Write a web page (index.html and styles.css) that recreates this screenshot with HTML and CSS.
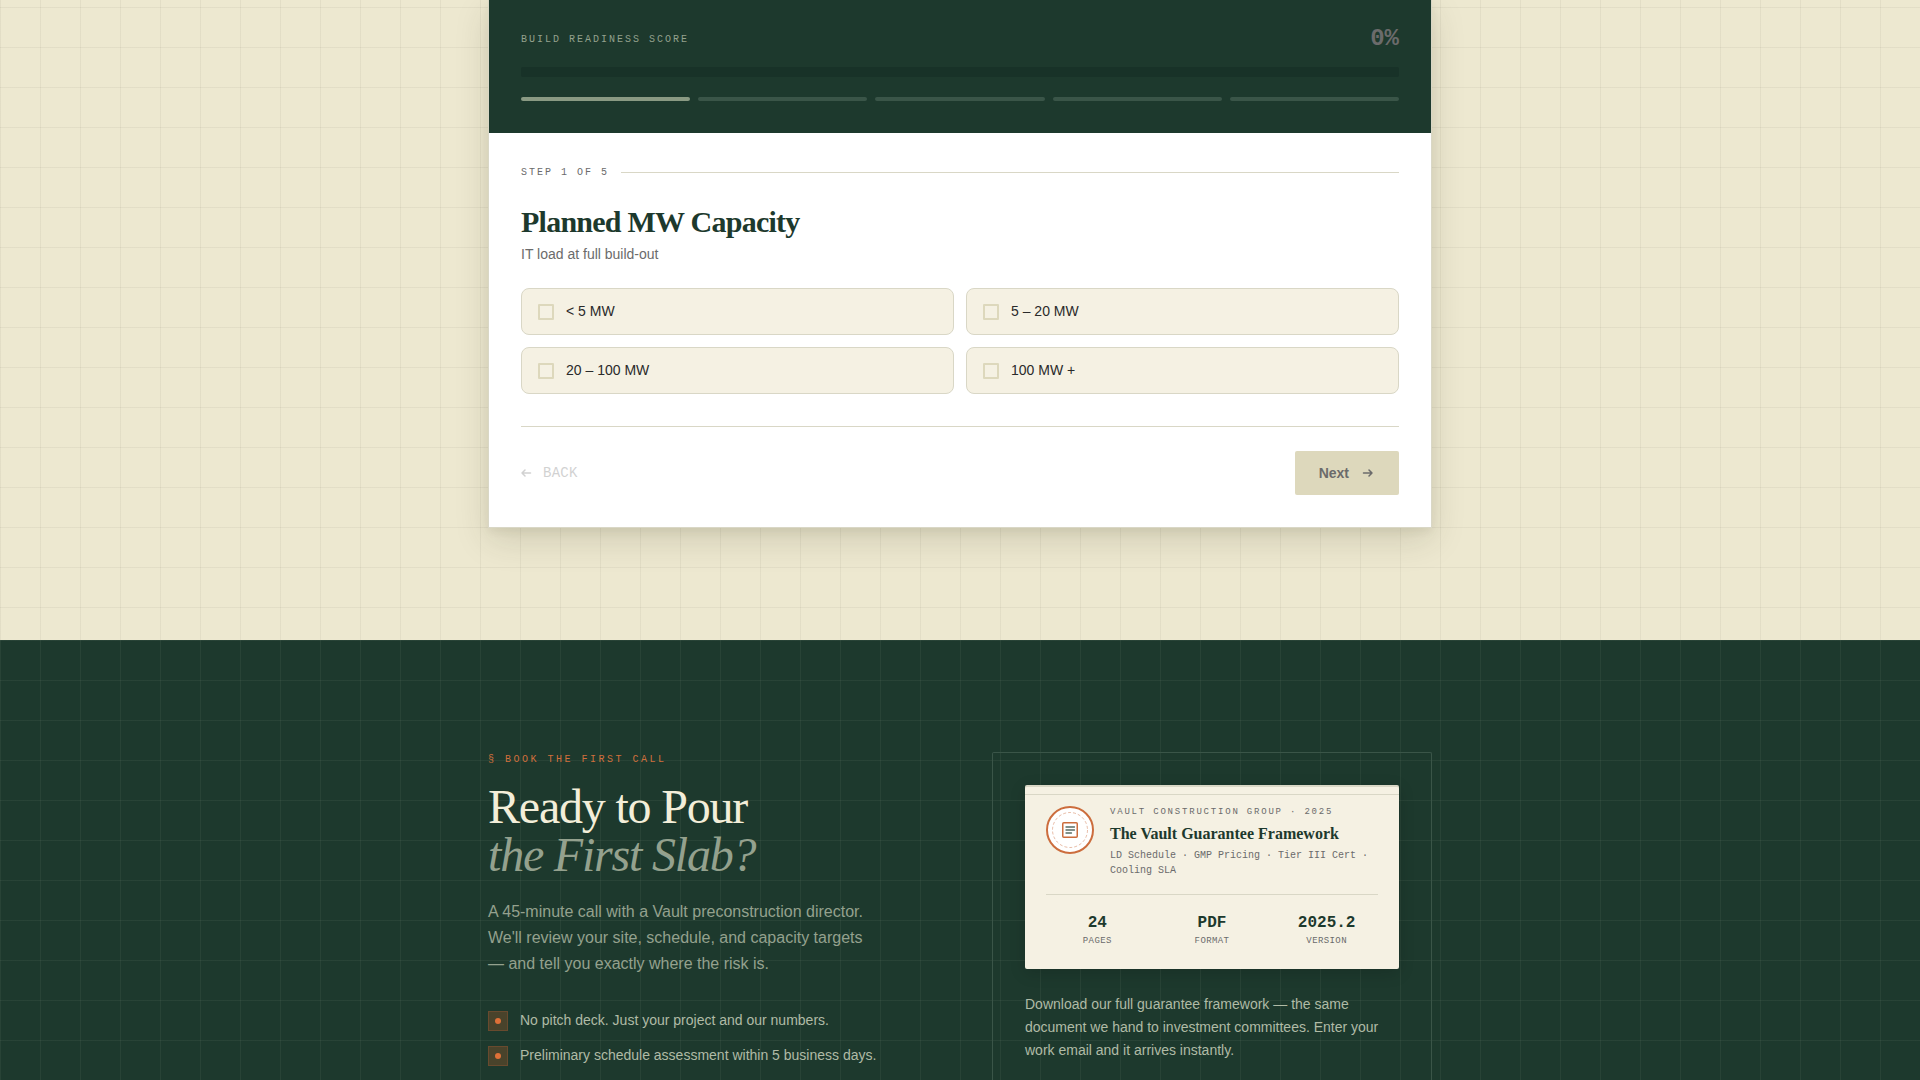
FILE: index.html
```html
<!DOCTYPE html>
<html lang="en">
<head>
<meta charset="utf-8">
<title>Vault Construction Group</title>
<meta name="viewport" content="width=device-width, initial-scale=1">
<link rel="stylesheet" href="styles.css">
</head>
<body>
<section class="assess">
  <form class="wizard">
    <header class="wizard-head">
      <div class="score-row">
        <span class="score-label">BUILD READINESS SCORE</span>
        <output class="score-value">0%</output>
      </div>
      <div class="track"></div>
      <div class="segments">
        <span class="segment segment-on"></span>
        <span class="segment"></span>
        <span class="segment"></span>
        <span class="segment"></span>
        <span class="segment"></span>
      </div>
    </header>
    <div class="wizard-body">
      <div class="step">STEP 1 OF 5</div>
      <h2 class="question">Planned MW Capacity</h2>
      <p class="hint">IT load at full build-out</p>
      <div class="options">
        <label class="option"><input class="tick" type="radio" name="capacity"><span>&lt; 5 MW</span></label>
        <label class="option"><input class="tick" type="radio" name="capacity"><span>5 – 20 MW</span></label>
        <label class="option"><input class="tick" type="radio" name="capacity"><span>20 – 100 MW</span></label>
        <label class="option"><input class="tick" type="radio" name="capacity"><span>100 MW +</span></label>
      </div>
      <footer class="wizard-nav">
        <button class="back" type="button" disabled>
          <svg width="14" height="14" viewBox="0 0 14 14" fill="none" stroke="currentColor" stroke-width="1.5" stroke-linecap="round" stroke-linejoin="round"><path d="M9.500 7H1M4 4L1 7l3 3"/></svg>
          BACK
        </button>
        <button class="next" type="button" disabled>
          Next
          <svg width="14" height="14" viewBox="0 0 14 14" fill="none" stroke="currentColor" stroke-width="1.500" stroke-linecap="round" stroke-linejoin="round"><path d="M2.500 7H11M8 4l3 3-3 3"/></svg>
        </button>
      </footer>
    </div>
  </form>
</section>
<section class="cta">
  <div class="cta-grid">
    <div class="pitch">
      <p class="eyebrow">§ BOOK THE FIRST CALL</p>
      <h2 class="title">Ready to Pour<br><em class="title-soft">the First Slab?</em></h2>
      <p class="lead">A 45-minute call with a Vault preconstruction director. We'll review your site, schedule, and capacity targets — and tell you exactly where the risk is.</p>
      <ul class="points">
        <li class="point"><span class="bullet"></span>No pitch deck. Just your project and our numbers.</li>
        <li class="point"><span class="bullet"></span>Preliminary schedule assessment within 5 business days.</li>
      </ul>
    </div>
    <aside class="download">
      <article class="doc">
        <div class="doc-top">
          <svg class="seal" width="48" height="48" viewBox="0 0 48 48" fill="none">
            <circle cx="24" cy="24" r="23" fill="#fff" stroke="#cc6d3d" stroke-width="2"/>
            <circle cx="24" cy="24" r="17.500" stroke="#cc6d3d" stroke-opacity=".45" stroke-dasharray="3 2"/>
            <rect x="16.750" y="16.750" width="14.500" height="14.500" rx="1" stroke="#cc6d3d" stroke-width="1.500"/>
            <path d="M20 21h8.500M20 24h8.500M20 27h5.500" stroke="#1e3a2f" stroke-opacity=".75" stroke-width="1.300" stroke-linecap="round"/>
          </svg>
          <div>
            <p class="doc-org">VAULT CONSTRUCTION GROUP · 2025</p>
            <h3 class="doc-title">The Vault Guarantee Framework</h3>
            <p class="doc-meta">LD Schedule · GMP Pricing · Tier III Cert · Cooling SLA</p>
          </div>
        </div>
        <dl class="stats">
          <div class="stat"><dt class="stat-label">PAGES</dt><dd class="stat-value">24</dd></div>
          <div class="stat"><dt class="stat-label">FORMAT</dt><dd class="stat-value">PDF</dd></div>
          <div class="stat"><dt class="stat-label">VERSION</dt><dd class="stat-value">2025.2</dd></div>
        </dl>
      </article>
      <p class="download-text">Download our full guarantee framework — the same document we hand to investment committees. Enter your work email and it arrives instantly.</p>
    </aside>
  </div>
</section>
</body>
</html>
```
FILE: styles.css
```css
:root {
  --green: #1d392d;
  --cream: #ede8d0;
  --paper: #f5f1e3;
  --sand: #ddd8bc;
  --line: #d9d7c6;
  --sage: #94a18e;
  --gray: #6b6b6b;
  --orange: #d06f3c;
  --mono: "Liberation Mono", "Courier New", monospace;
  --serif: "Liberation Serif", "Times New Roman", serif;
}

* { box-sizing: border-box; }

body, h2, h3, p, ul, dl, dd { margin: 0; padding: 0; }

body {
  font: 14px/21px "Liberation Sans", Arial, sans-serif;
  color: #2a2a2a;
  background: var(--green);
}

button { font: inherit; border: 0; padding: 0; background: none; }

/* Readiness wizard */
.assess {
  padding: 0 40px 112px;
  background-color: var(--cream);
  background-image:
    linear-gradient(rgba(60, 60, 40, 0.06) 1px, transparent 1px),
    linear-gradient(90deg, rgba(60, 60, 40, 0.06) 1px, transparent 1px);
  background-size: 40px 40px;
  background-position: 0 7px;
}

.wizard {
  max-width: 944px;
  margin: 0 auto;
  background: #fff;
  border: 1px solid var(--line);
  border-top: 0;
  box-shadow: 0 12px 32px rgba(50, 45, 20, 0.15), 0 4px 8px rgba(50, 45, 20, 0.06);
}

.wizard-head { padding: 21px 32px 32px; background: var(--green); }

.score-row { display: flex; justify-content: space-between; align-items: center; }

.score-label, .step { font: 10px/15px var(--mono); letter-spacing: 2px; }
.score-label { color: var(--sage); }
.score-value { font: bold 24px/36px var(--mono); color: var(--gray); }

.track {
  height: 10px;
  margin: 10px 0 20px;
  border-radius: 2px;
  background: #183228;
}

.segments { display: flex; gap: 8px; }
.segment { flex: 1; height: 4px; border-radius: 2px; background: #3a5548; }
.segment-on { background: #8a9a83; }

.wizard-body { padding: 32px; }

.step { display: flex; align-items: center; gap: 12px; color: var(--gray); }
.step::after { content: ""; flex: 1; height: 1px; background: var(--line); }

.question {
  margin-top: 24px;
  font: bold 30px/36px var(--serif);
  letter-spacing: -0.025em;
  color: var(--green);
}

.hint { margin: 4px 0 24px; line-height: 20px; color: var(--gray); }

.options { display: grid; grid-template-columns: 1fr 1fr; gap: 12px; }

.option {
  display: flex;
  align-items: center;
  gap: 12px;
  padding: 12px 16px;
  border: 1px solid var(--line);
  border-radius: 8px;
  background: var(--paper);
}

.tick {
  appearance: none;
  width: 16px;
  height: 16px;
  margin: 0;
  border: 2px solid var(--sand);
  border-radius: 1px;
}

.wizard-nav {
  display: flex;
  justify-content: space-between;
  align-items: center;
  margin-top: 32px;
  padding-top: 24px;
  border-top: 1px solid var(--line);
}

.back, .next { display: flex; align-items: center; }
.back {
  gap: 8px;
  font-family: var(--mono);
  letter-spacing: 0.02em;
  color: var(--gray);
  opacity: 0.3;
}
.next {
  gap: 12px;
  height: 44px;
  padding: 0 24px;
  border-radius: 2px;
  font-weight: bold;
  color: var(--gray);
  background: var(--sand);
}

/* Call to action */
.cta {
  padding: 112px 40px 0;
  background-color: var(--green);
  background-image:
    linear-gradient(rgba(138, 158, 140, 0.1) 1px, transparent 1px),
    linear-gradient(90deg, rgba(138, 158, 140, 0.1) 1px, transparent 1px);
  background-size: 40px 40px;
}

.cta-grid {
  display: grid;
  grid-template-columns: 1fr 1fr;
  gap: 64px;
  max-width: 944px;
  margin: 0 auto;
}

.eyebrow { font: 10px/15px var(--mono); letter-spacing: 2.5px; color: var(--orange); }

.title {
  margin: 16px 0 20px;
  font: 48px/48px var(--serif);
  letter-spacing: -0.025em;
  color: #f3eed9;
}
.title-soft { color: var(--sage); }

.lead { max-width: 384px; font-size: 16px; line-height: 26px; color: var(--sage); }

.points { display: grid; gap: 12px; margin-top: 32px; list-style: none; color: #b0bba6; }
.point { display: flex; gap: 12px; line-height: 23px; }

.bullet {
  display: grid;
  place-items: center;
  width: 20px;
  height: 20px;
  margin-top: 2px;
  border: 1px solid #684a2e;
  background: #49432b;
}
.bullet::after {
  content: "";
  width: 6px;
  height: 6px;
  border-radius: 50%;
  background: #de7038;
}

.download {
  height: 328px;
  padding: 32px;
  border: 1px solid #3a5548;
  border-bottom: 0;
  border-radius: 2px 2px 0 0;
}

.doc {
  padding: 21px;
  border-radius: 2px;
  background: linear-gradient(var(--line), var(--line)) 0 9px / 100% 1px no-repeat var(--paper);
  box-shadow: inset 0 2px var(--line), 0 4px 16px rgba(0, 0, 0, 0.15);
}

.doc-top {
  display: flex;
  gap: 16px;
  padding-bottom: 16px;
  border-bottom: 1px solid var(--line);
}
.seal { flex: none; }

.doc-org { font: 9px/13px var(--mono); letter-spacing: 1.8px; color: var(--gray); }
.doc-title { margin: 5px 0 4px; font: bold 16px/20px var(--serif); color: var(--green); }
.doc-meta { font: 10px/15px var(--mono); color: var(--gray); }

.stats { display: grid; grid-template-columns: repeat(3, 1fr); gap: 12px; margin-top: 16px; }
.stat { display: flex; flex-direction: column-reverse; text-align: center; }
.stat-value { font: bold 16px/24px var(--mono); color: var(--green); }
.stat-label { font: 9px/13px var(--mono); letter-spacing: 0.4px; color: var(--gray); }

.download-text { margin-top: 24px; line-height: 23px; color: #b0bba6; }
```
